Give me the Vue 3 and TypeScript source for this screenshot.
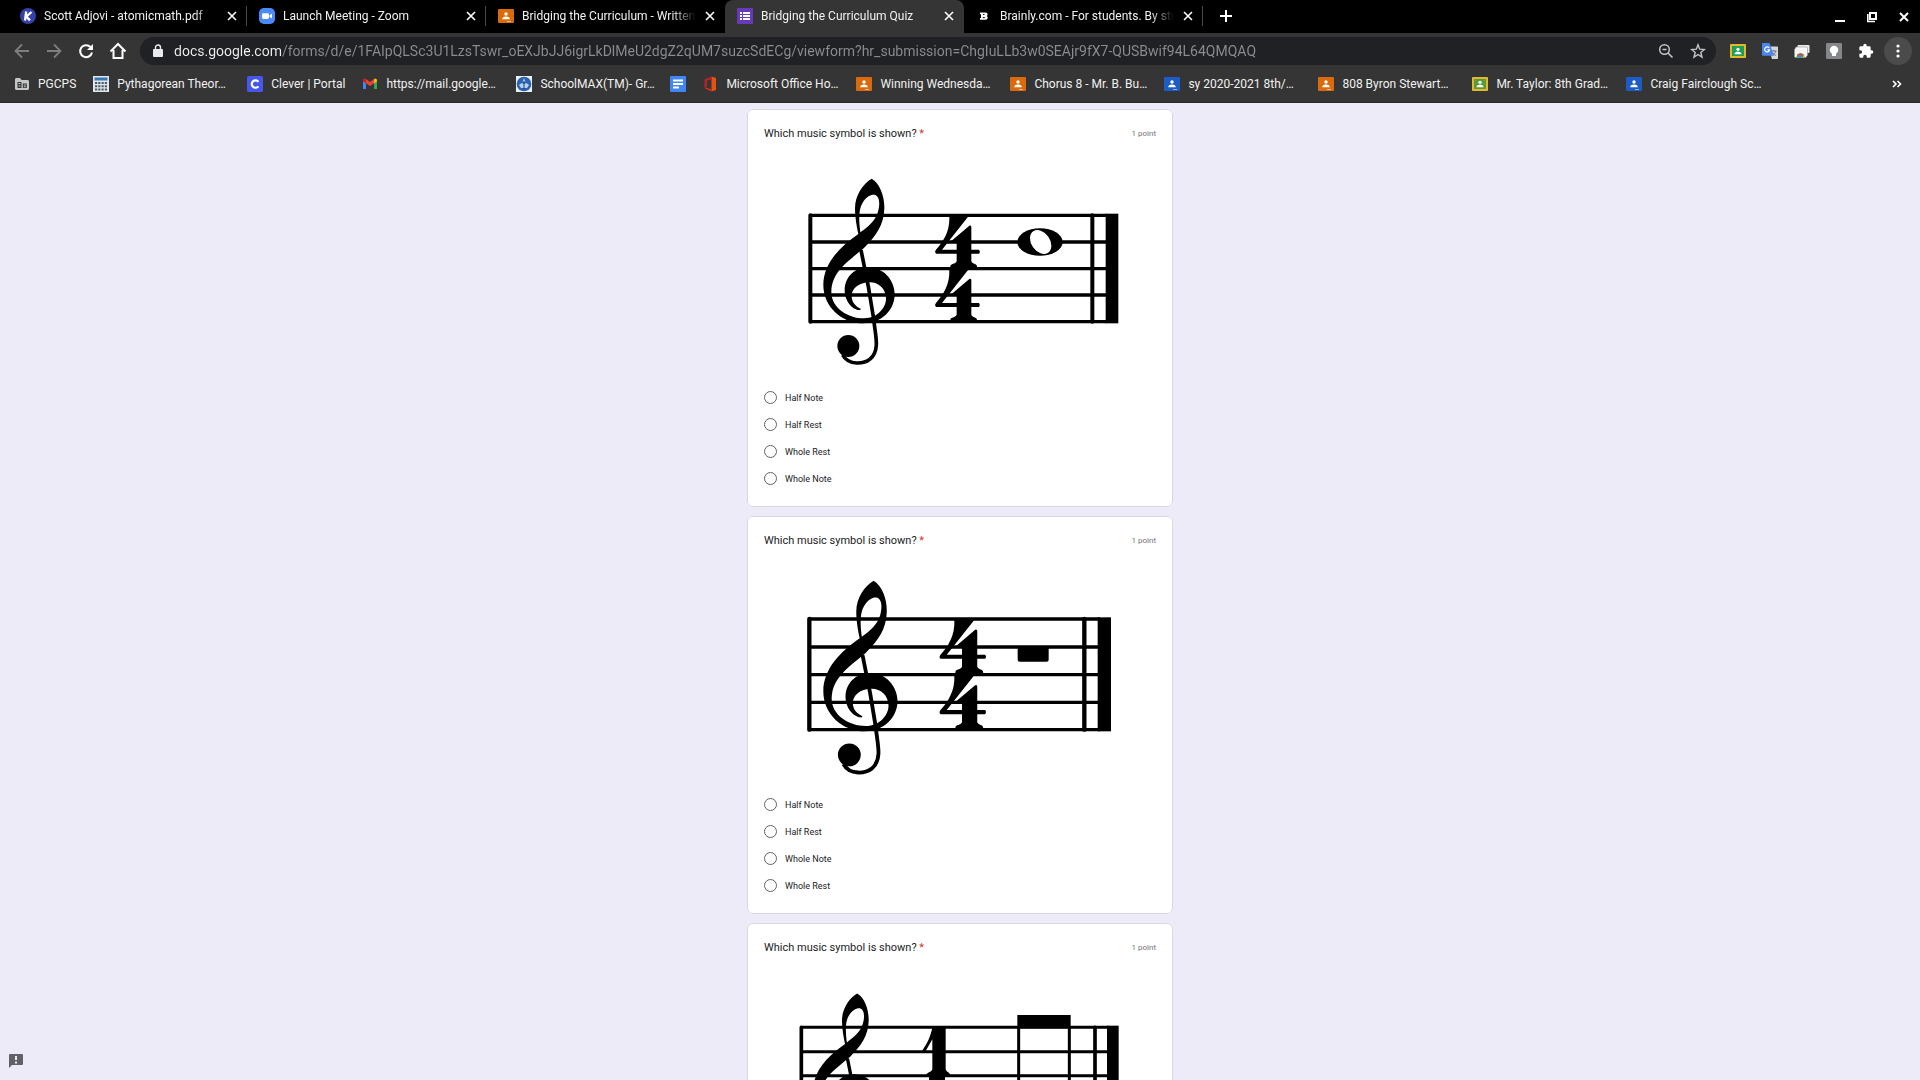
<script setup lang="ts">
import { ref } from 'vue'

interface Tab {
  title: string
  icon: string
  tint?: string
  active?: boolean
}

interface Bookmark {
  label: string
  icon: string
  tint?: string
  name?: string
}

interface Question {
  figure: 'whole-note' | 'half-rest' | 'beam'
  alt: string
  viewBox: string
  options: string[]
}

const tabs: Tab[] = [
  { title: 'Scott Adjovi - atomicmath.pdf', icon: 'kami' },
  { title: 'Launch Meeting - Zoom', icon: 'zoom' },
  { title: 'Bridging the Curriculum - Written', icon: 'classroom', tint: 'orange' },
  { title: 'Bridging the Curriculum Quiz', icon: 'forms', active: true },
  { title: 'Brainly.com - For students. By stu', icon: 'brainly' },
]

const bookmarks: Bookmark[] = [
  { label: 'PGCPS', icon: 'folder' },
  { label: 'Pythagorean Theor…', icon: 'calc' },
  { label: 'Clever | Portal', icon: 'clever' },
  { label: 'https://mail.google…', icon: 'gmail' },
  { label: 'SchoolMAX(TM)- Gr…', icon: 'school' },
  { label: '', icon: 'docs', name: 'Docs' },
  { label: 'Microsoft Office Ho…', icon: 'office' },
  { label: 'Winning Wednesda…', icon: 'classroom', tint: 'orange' },
  { label: 'Chorus 8 - Mr. B. Bu…', icon: 'classroom', tint: 'orange' },
  { label: 'sy 2020-2021 8th/…', icon: 'classroom', tint: 'blue' },
  { label: '808 Byron Stewart…', icon: 'classroom', tint: 'orange' },
  { label: 'Mr. Taylor: 8th Grad…', icon: 'classroom-framed', tint: 'olive' },
  { label: 'Craig Fairclough Sc…', icon: 'classroom', tint: 'blue' },
]

const extensions = [
  { icon: 'classroom-framed', name: 'Share to Classroom', tint: 'green' },
  { icon: 'translate', name: 'Google Translate' },
  { icon: 'remote', name: 'Web Store' },
  { icon: 'keep', name: 'Keep' },
  { icon: 'puzzle', name: 'Extensions' },
]

const url = ref(
  'docs.google.com/forms/d/e/1FAIpQLSc3U1LzsTswr_oEXJbJJ6igrLkDlMeU2dgZ2qUM7suzcSdECg/viewform?hr_submission=ChgIuLLb3w0SEAjr9fX7-QUSBwif94L64QMQAQ',
)

const questions: Question[] = [
  {
    figure: 'whole-note',
    alt: 'Treble staff in four four with a whole note',
    viewBox: '72 126 1176 726',
    options: ['Half Note', 'Half Rest', 'Whole Rest', 'Whole Note'],
  },
  {
    figure: 'half-rest',
    alt: 'Treble staff in four four with a rest',
    viewBox: '72 -3 1176 726',
    options: ['Half Note', 'Half Rest', 'Whole Note', 'Whole Rest'],
  },
  {
    figure: 'beam',
    alt: 'Treble staff with beamed notes',
    viewBox: '72 528 1176 726',
    options: [],
  },
]

const answers = ref<(string | null)[]>([null, null, null])
</script>

<template>
  <div class="window">
    <svg class="sprite" width="0" height="0" aria-hidden="true">
      <symbol id="i-kami" viewBox="0 0 16 16">
        <circle cx="8" cy="8" r="8" fill="#3541a8" />
        <path d="M6.2 3.5 5 12.5M11.5 4 6.3 8.6 10 12.4" fill="none" stroke="#fff" stroke-width="2.3" />
      </symbol>
      <symbol id="i-zoom" viewBox="0 0 16 16">
        <rect width="16" height="16" rx="5" fill="#4a8cf7" />
        <rect x="3" y="5.2" width="7" height="5.8" rx="1.4" fill="#fff" />
        <path d="M10.5 7.4 13 5.6v5l-2.5-1.8z" fill="#fff" />
      </symbol>
      <symbol id="i-classroom" viewBox="0 0 16 16">
        <rect y="1" width="16" height="14" rx="1" fill="currentColor" />
        <circle cx="8" cy="6" r="1.7" fill="#fff" />
        <path d="M4.2 11.2c0-2 2-2.7 3.8-2.7s3.8.7 3.8 2.7z" fill="#fff" />
        <path d="M9 13h4v1H9z" fill="#fff" opacity=".5" />
      </symbol>
      <symbol id="i-classroom-framed" viewBox="0 0 16 16">
        <rect y="1" width="16" height="14" rx="1" fill="#e4b92b" />
        <rect x="2" y="3" width="12" height="10" fill="currentColor" />
        <circle cx="8" cy="6.3" r="1.6" fill="#fff" />
        <path d="M4.5 11.2c0-1.9 2-2.5 3.5-2.5s3.5.6 3.5 2.5z" fill="#fff" />
      </symbol>
      <symbol id="i-forms" viewBox="0 0 16 16">
        <rect width="16" height="16" rx="1" fill="#673ab7" />
        <path d="M3 4h2v2H3zM6 4h7v2H6zM3 7h2v2H3zM6 7h7v2H6zM3 10h2v2H3zM6 10h7v2H6z" fill="#fff" />
      </symbol>
      <symbol id="i-brainly" viewBox="0 0 16 16">
        <path d="M4 4.500h5.500c2.600 0 2.600 3 1.100 3.500 1.900.8 1.400 3.800-1.400 3.800H4V10h1V6.300H4z" fill="#fff" />
        <path d="M7 6.400h1.500M6.800 9.600h2" stroke="#000" stroke-width="1" />
      </symbol>
      <symbol id="i-folder" viewBox="0 0 16 16">
        <path d="M1 3.500C1 2.700 1.600 2 2.400 2H6l1.500 2h6c.8 0 1.500.7 1.500 1.500v7c0 .8-.7 1.500-1.500 1.500h-11C1.700 14 1 13.300 1 12.500z" fill="#c4c5c7" />
        <path d="M3.500 6h4v6h-4zM8.800 7.500h4V12h-4z" fill="#353535" />
        <path d="M4.500 7h2v1h-2zM4.500 9.500h2v1h-2zM9.800 8.500h2v1h-2zM9.800 10.300h2v.9h-2z" fill="#c4c5c7" />
      </symbol>
      <symbol id="i-calc" viewBox="0 0 16 16">
        <rect width="16" height="16" fill="#dfe6ec" />
        <rect x="1.500" y="1.500" width="13" height="3" fill="#3a78b5" />
        <path d="M2 6h2.200v2H2zM5.200 6h2.200v2H5.200zM8.500 6h2.200v2H8.500zM11.800 6H14v2h-2.200zM2 9.200h2.200v2H2zM5.200 9.200h2.200v2H5.200zM8.500 9.200h2.200v2H8.500zM11.800 9.200H14v2h-2.200zM2 12.400h2.200v2H2zM5.200 12.400h2.200v2H5.200zM8.500 12.400h2.200v2H8.500zM11.800 12.400H14v2h-2.200z" fill="#4c5a66" />
      </symbol>
      <symbol id="i-clever" viewBox="0 0 16 16">
        <rect width="16" height="16" rx="1.500" fill="#4657ea" />
        <path d="M11.400 5.800A3.700 3.700 0 1 0 11.400 10.300" fill="none" stroke="#fff" stroke-width="2.200" />
      </symbol>
      <symbol id="i-gmail" viewBox="0 0 16 16">
        <path d="M1 4v9h3V6z" fill="#4285f4" />
        <path d="M15 4v9h-3V6z" fill="#34a853" />
        <path d="M1 4.500C1 2.600 3 2.200 4.200 3.200L8 6l3.800-2.800C13 2.200 15 2.600 15 4.500L12 7.300 8 10 4 7.300z" fill="#ea4335" />
        <path d="M12 3.100C13.200 2.200 15 2.700 15 4.500v.8l-3 2.300z" fill="#fbbc04" />
        <path d="M4 3.100C2.800 2.200 1 2.700 1 4.500v.8l3 2.300z" fill="#c5221f" />
      </symbol>
      <symbol id="i-school" viewBox="0 0 16 16">
        <rect width="16" height="16" fill="#e9f1f8" />
        <circle cx="8" cy="8" r="7.300" fill="#2a62b4" />
        <path d="M8 2 9.400 6H6.600zM3 9c2-2 3.500-2 5-1 1.500-1 3-1 5 1l-2 3H5z" fill="#b8d2ee" />
        <path d="M8 5v8" stroke="#173f83" stroke-width="1" />
      </symbol>
      <symbol id="i-docs" viewBox="0 0 16 16">
        <rect width="16" height="16" rx="1" fill="#4285f4" />
        <path d="M3 3.500h10v2H3zM3 7h10v2H3zM3 10.500h6v2H3z" fill="#fff" />
      </symbol>
      <symbol id="i-office" viewBox="0 0 16 16">
        <path d="M9.500.5 14 2v12l-4.500 1.500z" fill="#e8500f" />
        <path d="M9.500.5 2.500 3.400v8.800l2.600-1.400V4.600L9.500 3.500z" fill="#b5232b" />
        <path d="m2.500 12.200 7 3.300v-2l-4.300-1.700z" fill="#d92b1a" />
      </symbol>
      <symbol id="i-translate" viewBox="0 0 16 16">
        <path d="M6 3.500h9c.6 0 1 .4 1 1V15c0 .6-.4 1-1 1h-5z" fill="#d4d6da" />
        <path d="M9.500 8h5M12 7v1M13.800 8c-.5 2-1.800 3.600-3.300 4.500M10.800 9.500c.7 1.500 1.800 2.500 3 3" stroke="#697586" stroke-width="1" fill="none" />
        <path d="M1 0h6.500L12 12.800H1c-.6 0-1-.4-1-1V1c0-.6.400-1 1-1z" fill="#4a86ee" />
        <path d="M7.200 5A2.500 2.500 0 1 0 7.600 6.900H5.400" fill="none" stroke="#fff" stroke-width="1.200" />
      </symbol>
      <symbol id="i-remote" viewBox="0 0 16 16">
        <rect x="3.500" y="2" width="12" height="8" rx="1" fill="#ececec" />
        <rect x="1.500" y="4" width="12" height="9" rx="1" fill="#fff" stroke="#888" stroke-width=".6" />
        <rect x=".5" y="5.500" width="12" height="9" rx="1" fill="#f4f4f4" />
        <path d="M2.500 14.500a4 4 0 0 1 8 0z" fill="#3aa757" />
        <path d="M3 12.500a3.900 3.900 0 0 1 7 0L6.500 12z" fill="#e23b30" />
        <path d="M8.500 14.500h2a4 4 0 0 0-.7-2.300z" fill="#fbc116" />
        <circle cx="6.500" cy="13.500" r="1.600" fill="#4285f4" />
      </symbol>
      <symbol id="i-keep" viewBox="0 0 16 16">
        <rect width="16" height="16" rx="1" fill="#85878b" />
        <circle cx="8" cy="7" r="4.200" fill="#fff" />
        <path d="M6 10h4v3H6z" fill="#fff" />
      </symbol>
      <symbol id="i-puzzle" viewBox="0 0 24 24">
        <path d="M20.500 11H19V7a2 2 0 0 0-2-2h-4V3.500a2.500 2.500 0 0 0-5 0V5H4a2 2 0 0 0-2 2v3.800h1.500a2.700 2.700 0 0 1 0 5.400H2V20a2 2 0 0 0 2 2h3.800v-1.500a2.700 2.700 0 0 1 5.400 0V22H17a2 2 0 0 0 2-2v-4h1.500a2.500 2.500 0 0 0 0-5z" fill="#fff" />
      </symbol>

      <!-- Treble clef followed by the stacked time signature -->
      <symbol id="m-clef" overflow="visible">
        <path
          fill-rule="evenodd"
          d="M395 236C420 250 434 290 433 325C432 375 408 408 372 444C320 488 276 515 274 575C274 625 325 655 372 655C415 655 439 620 438 595C437 565 415 547 390 547C355 547 335 567 335 588C335 608 348 620 363 627L360 630C335 630 314 600 314 572C314 530 345 502 385 502C430 502 464 540 464 583C464 630 425 670 370 670C305 670 250 620 250 555C250 490 300 440 355 402C350 380 345 350 345 325C345 285 370 250 395 236ZM361 397C357 365 354 330 368 308C380 288 396 282 406 285C418 290 421 310 414 335C406 362 385 380 361 397Z"
        />
        <path d="M363 450L385 560L400 650C406 700 410 715 409 735C407 775 380 790 350 789C328 788 315 778 308 765" fill="none" stroke="#000" stroke-width="11" />
        <circle cx="325" cy="738" r="33" />
      </symbol>
      <symbol id="m-four" overflow="visible">
        <path d="M628 348H686L606 449H650V423H634L688 377Q694 375 694 381V449H717Q722 455 717 461H694V484C698 494 710 490 711 499V508H631V499C632 490 646 494 650 484V461H589Q582 457 588 449C610 424 630 395 628 348Z" />
      </symbol>
      <symbol id="m-time" overflow="visible">
        <use href="#m-four" />
        <use href="#m-four" y="160" />
      </symbol>
    </svg>

    <header class="chrome">
      <nav class="tabstrip" aria-label="Tabs">
        <div v-for="tab in tabs" :key="tab.title" class="tab" :class="{ active: tab.active }">
          <svg class="favicon" :class="tab.tint" aria-hidden="true"><use :href="`#i-${tab.icon}`" /></svg>
          <span class="tab-title">{{ tab.title }}</span>
          <button class="icon-button close" type="button" aria-label="Close tab">
            <svg width="10" height="10" viewBox="0 0 10 10"><path d="M1 1l8 8M9 1 1 9" stroke="#fff" stroke-width="1.600" /></svg>
          </button>
        </div>
        <button class="icon-button new-tab" type="button" aria-label="New tab">
          <svg width="12" height="12" viewBox="0 0 12 12"><path d="M6 0v12M0 6h12" stroke="#fff" stroke-width="2" /></svg>
        </button>
        <div class="window-controls">
          <button class="icon-button" type="button" aria-label="Minimize">
            <svg width="12" height="12" viewBox="0 0 12 12"><path d="M1 10h10" stroke="#fff" stroke-width="2" /></svg>
          </button>
          <button class="icon-button" type="button" aria-label="Restore">
            <svg width="12" height="12" viewBox="0 0 12 12" fill="none" stroke="#fff">
              <path d="M4 2h6v6H4z" stroke-width="2" />
              <path d="M1.800 3v7.500H9" stroke-width="1.600" />
            </svg>
          </button>
          <button class="icon-button" type="button" aria-label="Close window">
            <svg width="12" height="12" viewBox="0 0 12 12"><path d="M2 2l8 8M10 2l-8 8" stroke="#fff" stroke-width="2" /></svg>
          </button>
        </div>
      </nav>

      <div class="toolbar">
        <button class="icon-button nav" type="button" aria-label="Back">
          <svg width="16" height="16" viewBox="0 0 16 16" fill="none" stroke="#7d7e80" stroke-width="1.800"><path d="M15 8H2M8 1.500 1.500 8 8 14.500" /></svg>
        </button>
        <button class="icon-button nav" type="button" aria-label="Forward">
          <svg width="16" height="16" viewBox="0 0 16 16" fill="none" stroke="#7d7e80" stroke-width="1.800"><path d="M1 8h13M8 1.500 14.500 8 8 14.500" /></svg>
        </button>
        <button class="icon-button nav" type="button" aria-label="Reload">
          <svg width="16" height="16" viewBox="0 0 16 16" fill="none" stroke="#fff" stroke-width="2"><path d="M14 9.500A6 6 0 1 1 12.500 4" /><path d="M15 1v6H9z" fill="#fff" stroke="none" /></svg>
        </button>
        <button class="icon-button nav" type="button" aria-label="Home">
          <svg width="18" height="18" viewBox="0 0 18 18" fill="none" stroke="#fff" stroke-width="2"><path d="M1.500 9.500 9 2l7.500 7.500M4.500 8v8h9V8" /></svg>
        </button>

        <div class="omnibox">
          <svg width="10" height="14" viewBox="0 0 10 14" aria-hidden="true">
            <rect y="5" width="10" height="8" rx="1" fill="#e8eaed" />
            <path d="M2.500 5.500V3.500a2.500 2.500 0 0 1 5 0v2" fill="none" stroke="#e8eaed" stroke-width="1.400" />
          </svg>
          <input v-model="url" type="text" aria-label="Address" spellcheck="false" />
          <button class="icon-button page-action" type="button" aria-label="Zoom">
            <svg width="16" height="16" viewBox="0 0 16 16" fill="none" stroke="#c4c5c7" stroke-width="1.500"><circle cx="6.500" cy="6.500" r="4.800" /><path d="m10 10 4.500 4.500M4.500 6.500h4" /></svg>
          </button>
          <button class="icon-button page-action" type="button" aria-label="Bookmark this page">
            <svg width="16" height="16" viewBox="0 0 16 16" fill="none" stroke="#c4c5c7" stroke-width="1.400"><path d="m8 1.800 1.700 4.400 4.700.3-3.600 3 1.200 4.600L8 11.500l-4 2.600 1.200-4.600-3.600-3 4.700-.3z" /></svg>
          </button>
        </div>

        <button v-for="ext in extensions" :key="ext.name" class="icon-button nav" type="button" :aria-label="ext.name">
          <svg class="favicon" :class="ext.tint"><use :href="`#i-${ext.icon}`" /></svg>
        </button>
        <button class="icon-button menu" type="button" aria-label="Menu">
          <svg width="4" height="14" viewBox="0 0 4 14" fill="#fff"><circle cx="2" cy="2" r="1.600" /><circle cx="2" cy="7" r="1.600" /><circle cx="2" cy="12" r="1.600" /></svg>
        </button>
      </div>

      <nav class="bookmarks" aria-label="Bookmarks">
        <a v-for="mark in bookmarks" :key="mark.label" href="#" class="bookmark" :aria-label="mark.name">
          <svg class="favicon" :class="mark.tint" aria-hidden="true"><use :href="`#i-${mark.icon}`" /></svg>
          <span v-if="mark.label" class="mark-label" :class="{ clipped: mark.label.endsWith('…') }">{{ mark.label }}</span>
        </a>
        <button class="icon-button overflow" type="button" aria-label="More bookmarks">
          <svg width="10" height="8" viewBox="0 0 10 8" fill="none" stroke="#fff" stroke-width="1.600"><path d="m1 1 3 3-3 3M5.500 1l3 3-3 3" /></svg>
        </button>
      </nav>
    </header>

    <main class="page">
      <form class="questions">
        <fieldset v-for="(question, q) in questions" :key="q" class="card">
          <div class="card-head">
            <h2>Which music symbol is shown? <span class="required">*</span></h2>
            <span class="points">1 point</span>
          </div>

          <svg class="figure" :viewBox="question.viewBox" role="img" :aria-label="question.alt">
            <g v-if="question.figure === 'whole-note'">
              <path d="M212 346H1100M212 426H1100M212 506H1100M212 585H1100M212 665H1100" stroke="#000" stroke-width="10" />
              <path d="M211 346V665M1057 346V665" stroke="#000" stroke-width="12" stroke-linecap="round" />
              <rect x="1097" y="341" width="38" height="329" />
              <use href="#m-clef" />
              <use href="#m-time" />
              <ellipse cx="900" cy="426" rx="68" ry="41" />
              <ellipse cx="902" cy="426" rx="39" ry="28" transform="rotate(55 902 426)" fill="#fff" />
            </g>
            <g v-else-if="question.figure === 'half-rest'">
              <path d="M208 207H1080M208 291H1080M208 374H1080M208 457H1080M208 539H1080" stroke="#000" stroke-width="10" />
              <path d="M208 207V539M1033 207V539" stroke="#000" stroke-width="13" stroke-linecap="round" />
              <rect x="1073" y="202" width="40" height="342" />
              <g transform="translate(-10 -153) scale(1.04)">
                <use href="#m-clef" />
                <use href="#m-time" />
              </g>
              <rect x="833" y="289" width="93" height="46" rx="6" />
            </g>
            <g v-else>
              <path d="M185 742H1105M185 815H1105M185 887H1105M185 960H1105M185 1032H1105" stroke="#000" stroke-width="9" />
              <path d="M184 742V1032M1065 742V1032" stroke="#000" stroke-width="11" stroke-linecap="round" />
              <rect x="1101" y="737" width="35" height="299" />
              <g transform="translate(-8 426) scale(0.91)"><use href="#m-clef" /></g>
              <path d="M577 742H617V868C620 878 630 876 632 888H615V1032H567V888H557C560 876 574 878 577 868V778L557 813H546C562 790 572 770 577 742Z" />
              <rect x="832" y="705" width="160" height="40" />
              <path d="M836 740V1000M988 740V1000" stroke="#000" stroke-width="9" />
            </g>
          </svg>

          <label v-for="option in question.options" :key="option" class="option">
            <input v-model="answers[q]" type="radio" :name="`question-${q}`" :value="option" />
            <span>{{ option }}</span>
          </label>
        </fieldset>
      </form>
      <button class="icon-button feedback" type="button" aria-label="Report a problem">
        <svg width="14" height="14" viewBox="0 0 14 14"><path d="M1 0h12a1 1 0 0 1 1 1v9a1 1 0 0 1-1 1H3l-3 3V1a1 1 0 0 1 1-1z" fill="#626068" /><path d="M6 2h2v4H6zM6 7.500h2v2H6z" fill="#eeebf8" /></svg>
      </button>
    </main>
  </div>
</template>

<style>
body {
  margin: 0;
}
</style>

<style scoped>
.window {
  display: flex;
  flex-direction: column;
  height: 100vh;
  overflow: hidden;
  font-family: Roboto, "Liberation Sans", sans-serif;
  font-size: 12px;
}

.sprite {
  position: absolute;
}

.icon-button {
  display: flex;
  flex: none;
  align-items: center;
  justify-content: center;
  padding: 0;
  border: 0;
  background: none;
}

.favicon {
  flex: none;
  width: 16px;
  height: 16px;
}

.orange { color: #d96b0c; }
.blue { color: #1d5cc4; }
.green { color: #1e9e57; }
.olive { color: #5a9a3a; }

.chrome {
  flex: none;
  border-bottom: 1px solid #27282a;
  background: #353535;
  color: #f1f1f1;
}

.tabstrip {
  display: flex;
  align-items: stretch;
  height: 33px;
  padding-left: 8px;
  background: #000;
}

.tab {
  display: flex;
  box-sizing: border-box;
  flex: 0 1 239px;
  align-items: center;
  min-width: 0;
  padding: 0 10px 1px 12px;
  background: linear-gradient(#4a4a4a, #4a4a4a) right 6px / 1px 20px no-repeat;
}

.tab:nth-child(3) {
  background: none;
}

.tab.active {
  border-radius: 8px 8px 0 0;
  background: #353535;
}

.tab-title {
  flex: 1;
  min-width: 0;
  margin-left: 8px;
  overflow: hidden;
  line-height: 16px;
  white-space: nowrap;
  -webkit-mask-image: linear-gradient(to left, transparent, #000 24px);
  mask-image: linear-gradient(to left, transparent, #000 24px);
}

.close {
  width: 10px;
  height: 16px;
  margin: 0 0 0 9px;
}

.new-tab {
  width: 28px;
  height: 32px;
  margin-left: 9px;
}

.window-controls {
  display: flex;
  gap: 20px;
  align-items: center;
  margin-left: auto;
  padding-right: 10px;
}

.toolbar {
  display: flex;
  align-items: center;
  height: 36px;
  padding: 0 8px 0 6px;
}

.nav {
  width: 32px;
  height: 28px;
}

.omnibox {
  display: flex;
  flex: 1;
  align-items: center;
  min-width: 0;
  height: 28px;
  margin: 0 6px;
  padding: 0 2px 0 13px;
  border-radius: 14px;
  background: #202124;
}

.omnibox input {
  flex: 1;
  min-width: 0;
  margin-left: 11px;
  padding: 0;
  border: 0;
  outline: 0;
  background: linear-gradient(to right, #f1f1f1 107px, #8b8d90 107px);
  -webkit-background-clip: text;
  background-clip: text;
  color: #8b8d90;
  font: 14px/20px Roboto, "Liberation Sans", sans-serif;
  -webkit-text-fill-color: transparent;
}

.page-action {
  width: 32px;
  height: 28px;
}

.menu {
  width: 28px;
  height: 28px;
  margin-left: 2px;
  border-radius: 14px;
  background: #4b4b4c;
}

.bookmarks {
  display: flex;
  gap: 16px;
  align-items: center;
  height: 30px;
  padding: 0 18px 3px 14px;
  overflow: hidden;
}

.bookmark {
  display: flex;
  flex: none;
  gap: 8px;
  align-items: center;
  color: inherit;
  line-height: 16px;
  text-decoration: none;
  white-space: nowrap;
}

.mark-label {
  padding-right: 1px;
}

.clipped {
  width: 113px;
}

.overflow {
  margin-left: auto;
}

.page {
  position: relative;
  flex: 1;
  min-height: 0;
  overflow: hidden;
  background: #eeebf8;
}

.questions {
  display: flex;
  flex-direction: column;
  gap: 9px;
  max-width: 426px;
  margin: 0 auto;
  padding-top: 6px;
}

.card {
  box-sizing: border-box;
  min-width: 0;
  margin: 0;
  padding: 16px 16px 14px;
  border: 1px solid #dad7e4;
  border-radius: 6px;
  background: #fff;
  color: #202124;
}

.card-head {
  display: flex;
  align-items: center;
  justify-content: space-between;
}

h2 {
  margin: 0;
  font-size: 11px;
  font-weight: 400;
  line-height: 16px;
}

.required {
  color: #d93025;
}

.points {
  color: #70757a;
  font-size: 8px;
  line-height: 16px;
}

.figure {
  display: block;
  width: 100%;
}

.option {
  display: flex;
  gap: 8px;
  align-items: center;
  height: 27px;
  font-size: 9px;
}

.option input {
  width: 13px;
  height: 13px;
  margin: 0;
  border: 1px solid #5f6368;
  border-radius: 50%;
  appearance: none;
}

.option input:checked {
  border-color: #673ab7;
  background: radial-gradient(#673ab7 3px, transparent 4px);
}

.feedback {
  position: absolute;
  bottom: 12px;
  left: 9px;
}
</style>
